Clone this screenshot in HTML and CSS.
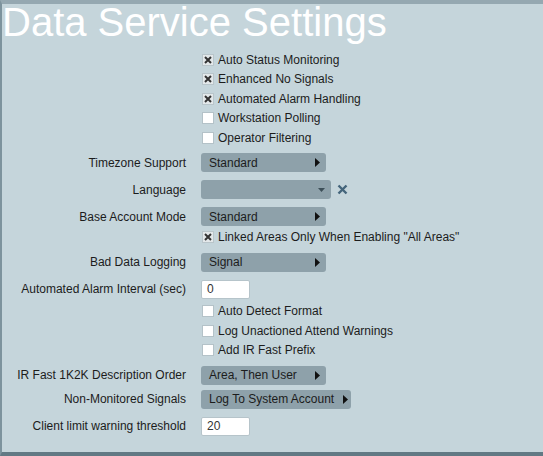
FILE: index.html
```html
<!DOCTYPE html>
<html>
<head>
<meta charset="utf-8">
<link rel="stylesheet" href="styles.css">
</head>
<body>
<div class="page">
  <h1 class="title">Data Service Settings</h1>
  <div class="form">
    <div class="row chk first"><span class="lbl"></span><label class="cb"><span class="box on"><svg viewBox="0 0 10 10"><path d="M2 2L8 8M8 2L2 8"/></svg></span>Auto Status Monitoring</label></div>
    <div class="row chk"><span class="lbl"></span><label class="cb"><span class="box on"><svg viewBox="0 0 10 10"><path d="M2 2L8 8M8 2L2 8"/></svg></span>Enhanced No Signals</label></div>
    <div class="row chk"><span class="lbl"></span><label class="cb"><span class="box on"><svg viewBox="0 0 10 10"><path d="M2 2L8 8M8 2L2 8"/></svg></span>Automated Alarm Handling</label></div>
    <div class="row chk"><span class="lbl"></span><label class="cb"><span class="box"></span>Workstation Polling</label></div>
    <div class="row chk"><span class="lbl"></span><label class="cb"><span class="box"></span>Operator Filtering</label></div>

    <div class="row fld"><span class="lbl">Timezone Support</span><div class="sel w125"><span>Standard</span><svg class="tri" viewBox="0 0 5 9"><path d="M0 0L5 4.5L0 9Z"/></svg></div></div>
    <div class="row fld"><span class="lbl">Language</span><div class="combo"><div class="sel w130"><span></span><svg class="caret" viewBox="0 0 7 4"><path d="M0 0H7L3.5 4Z"/></svg></div><svg class="clear" viewBox="0 0 11 11"><path d="M1.5 1.5L9.5 9.5M9.5 1.5L1.5 9.5"/></svg></div></div>
    <div class="row fld"><span class="lbl">Base Account Mode</span><div class="sel w125"><span>Standard</span><svg class="tri" viewBox="0 0 5 9"><path d="M0 0L5 4.5L0 9Z"/></svg></div></div>
    <div class="row chk afterfld"><span class="lbl"></span><label class="cb"><span class="box on"><svg viewBox="0 0 10 10"><path d="M2 2L8 8M8 2L2 8"/></svg></span>Linked Areas Only When Enabling "All Areas"</label></div>

    <div class="row fld"><span class="lbl">Bad Data Logging</span><div class="sel w125"><span>Signal</span><svg class="tri" viewBox="0 0 5 9"><path d="M0 0L5 4.5L0 9Z"/></svg></div></div>
    <div class="row fld"><span class="lbl">Automated Alarm Interval (sec)</span><div class="inp">0</div></div>
    <div class="row chk afterfld2"><span class="lbl"></span><label class="cb"><span class="box"></span>Auto Detect Format</label></div>
    <div class="row chk"><span class="lbl"></span><label class="cb"><span class="box"></span>Log Unactioned Attend Warnings</label></div>
    <div class="row chk"><span class="lbl"></span><label class="cb"><span class="box"></span>Add IR Fast Prefix</label></div>

    <div class="row fld ir"><span class="lbl">IR Fast 1K2K Description Order</span><div class="sel w125"><span>Area, Then User</span><svg class="tri" viewBox="0 0 5 9"><path d="M0 0L5 4.5L0 9Z"/></svg></div></div>
    <div class="row fld nm"><span class="lbl">Non-Monitored Signals</span><div class="sel w150"><span>Log To System Account</span><svg class="tri" viewBox="0 0 5 9"><path d="M0 0L5 4.5L0 9Z"/></svg></div></div>
    <div class="row fld"><span class="lbl">Client limit warning threshold</span><div class="inp">20</div></div>
  </div>
</div>
</body>
</html>
```

FILE: styles.css
```css
html, body {
  margin: 0;
  padding: 0;
}
body {
  font-family: "Liberation Sans", Arial, sans-serif;
  font-size: 12px;
  color: #1c1c1c;
  background: #c5d5db;
}
.page {
  box-sizing: border-box;
  width: 543px;
  height: 456px;
  background: #c5d5db;
  border-top: 4px solid #95a8b1;
  border-left: 2px solid #7d939d;
  border-bottom: 4px solid #627984;
  overflow: hidden;
}
.title {
  margin: 0;
  padding-left: 0;
  font-size: 40px;
  line-height: 37px;
  height: 37px;
  font-weight: normal;
  color: #ffffff;
}
.form {
  display: flex;
  flex-direction: column;
  padding-top: 8.75px;
}
.row {
  display: grid;
  grid-template-columns: 184px auto;
  column-gap: 15px;
  align-items: center;
}
.lbl {
  text-align: right;
  white-space: nowrap;
}
.chk {
  height: 19.5px;
}
.fld {
  height: 19px;
  margin-top: 8px;
}
.chk + .fld {
  margin-top: 6px;
}
.afterfld {
  margin-top: 0.75px;
}
.afterfld2 {
  margin-top: 2.75px;
}
.fld.ir {
  margin-top: 5.75px;
}
.fld.nm {
  margin-top: 5px;
}
.cb {
  display: flex;
  align-items: center;
  white-space: nowrap;
}
.box {
  box-sizing: border-box;
  width: 12px;
  height: 12px;
  margin-left: 1px;
  margin-right: 4px;
  background: #ffffff;
  border: 1px solid #b4c2c8;
  display: flex;
}
.box.on {
  background: #e3e8ea;
  border-color: #b9c5ca;
}
.box svg {
  width: 10px;
  height: 10px;
}
.box svg path {
  stroke: #333333;
  stroke-width: 2;
  fill: none;
}
.sel {
  box-sizing: border-box;
  height: 19px;
  background: #8ea1aa;
  border-radius: 3px;
  display: flex;
  align-items: center;
  justify-content: space-between;
  padding: 0 6px 0 8px;
  white-space: nowrap;
}
.w125 { width: 125px; }
.w130 { width: 130px; padding-right: 6px; }
.w150 { width: 150px; padding-right: 3px; }
.tri {
  width: 5px;
  height: 9px;
  flex: none;
}
.tri path {
  fill: #111;
}
.combo {
  display: flex;
  align-items: center;
}
.caret {
  width: 7px;
  height: 4px;
}
.caret path {
  fill: #3d4f58;
}
.clear {
  width: 11px;
  height: 11px;
  margin-left: 6px;
}
.clear path {
  stroke: #44657b;
  stroke-width: 2.4;
  fill: none;
}
.inp {
  box-sizing: border-box;
  width: 49px;
  height: 19px;
  background: #ffffff;
  border: 1px solid #b6c4ca;
  border-radius: 2px;
  padding-left: 5px;
  line-height: 17px;
  color: #333;
}
```
